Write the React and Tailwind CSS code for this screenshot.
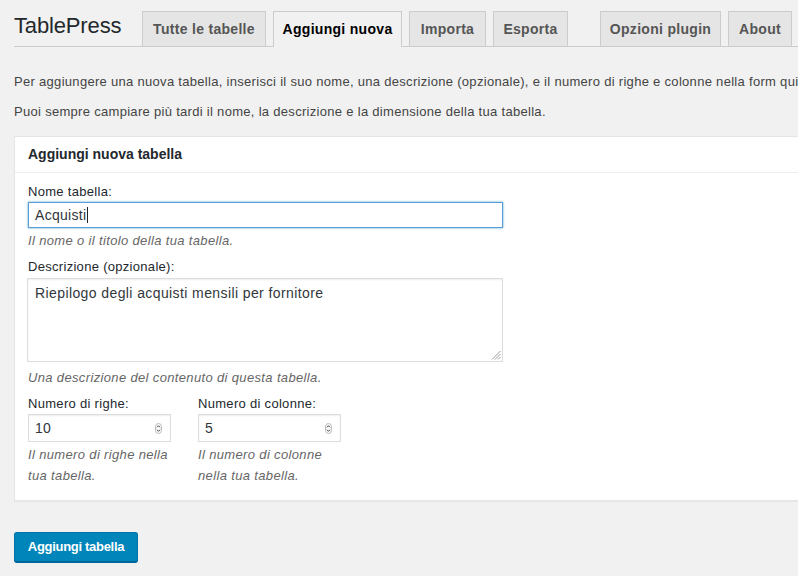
import React from 'react'

const tabs = [
  { label: 'Tutte le tabelle', w: 'w-[124px]' },
  { label: 'Aggiungi nuova', w: 'w-[129px]', active: true },
  { label: 'Importa', w: 'w-[77px]' },
  { label: 'Esporta', w: 'w-[75px]', gap: 'mr-[32px]' },
  { label: 'Opzioni plugin', w: 'w-[121px]' },
  { label: 'About', w: 'w-[64px]' },
]

function Spinner() {
  return (
    <svg width="7" height="11" viewBox="0 0 7 11" className="shrink-0">
      <rect x="0.5" y="0.5" width="6" height="10" rx="3" fill="#fafafa" stroke="#bbb" />
      <path d="M2 4.3 L3.5 2.7 L5 4.3" fill="none" stroke="#444" strokeWidth="1" />
      <path d="M2 6.7 L3.5 8.3 L5 6.7" fill="none" stroke="#444" strokeWidth="1" />
    </svg>
  )
}

function NumberField({ label, value, help }) {
  return (
    <div className="w-[143px]">
      <div className="text-[13px] leading-[19px] tracking-[0.3px] text-[#23282d]">{label}</div>
      <div className="mt-[1px] h-[28px] border border-[#ddd] bg-white shadow-[inset_0_1px_2px_rgba(0,0,0,0.07)] flex items-center justify-between pl-[6px] pr-[8px]">
        <span className="text-[14px] tracking-[0.3px] text-[#32373c]">{value}</span>
        <Spinner />
      </div>
      <p className="mt-[2px] text-[13px] leading-[21px] tracking-[0.35px] italic text-[#666]">{help}</p>
    </div>
  )
}

export default function App() {
  return (
    <div className="w-[798px] h-[576px] overflow-hidden bg-[#f1f1f1] font-['Liberation_Sans',Arial,sans-serif]">
      <div className="w-[1000px] pl-[14px]">
        {/* Title + tabs */}
        <div className="flex items-end pt-[11px] border-b border-[#ccc]">
          <h1 className="self-start w-[128px] text-[22px] leading-[30px] tracking-[-0.15px] text-[#23282d]">TablePress</h1>
          {tabs.map((t) => (
            <div
              key={t.label}
              className={`${t.w} ${t.gap || 'mr-[7px]'} flex justify-center border border-b-0 border-[#ccc] text-[14px] font-bold leading-[20px] tracking-[0.3px] pt-[7px] ${
                t.active
                  ? 'h-[36px] -mb-px bg-[#f1f1f1] text-black'
                  : 'h-[35px] bg-[#e5e5e5] text-[#555]'
              }`}
            >
              {t.label}
            </div>
          ))}
        </div>

        {/* Intro */}
        <p className="mt-[25px] text-[13px] leading-[19px] tracking-[0.3px] text-[#444] whitespace-nowrap">
          Per aggiungere una nuova tabella, inserisci il suo nome, una descrizione (opzionale), e il numero di righe e colonne nella form qui sotto.
        </p>
        <p className="mt-[11px] text-[13px] leading-[19px] tracking-[0.3px] text-[#444] whitespace-nowrap">
          Puoi sempre campiare più tardi il nome, la descrizione e la dimensione della tua tabella.
        </p>

        {/* Panel */}
        <div className="mt-[15px] bg-white border border-[#e5e5e5] shadow-[0_1px_1px_rgba(0,0,0,0.04)]">
          <div className="h-[36px] flex items-center px-[13px] border-b border-[#eee]">
            <h2 className="text-[14px] font-bold text-[#23282d]">Aggiungi nuova tabella</h2>
          </div>
          <div className="px-[13px] pt-[9px] pb-[14px]">
            <div className="text-[13px] leading-[19px] tracking-[0.3px] text-[#23282d]">Nome tabella:</div>
            <div className="mt-[1px] w-[475px] h-[26px] border border-[#5b9dd9] shadow-[0_0_2px_rgba(30,140,190,0.8)] bg-white flex items-center pl-[6px]">
              <span className="text-[14px] tracking-[0.3px] text-[#32373c]">Acquisti</span>
              <span className="ml-[1px] w-px h-[16px] bg-[#222]" />
            </div>
            <p className="mt-[2px] text-[13px] leading-[21px] tracking-[0.35px] italic text-[#666]">Il nome o il titolo della tua tabella.</p>

            <div className="mt-[6px] text-[13px] leading-[19px] tracking-[0.3px] text-[#23282d]">Descrizione (opzionale):</div>
            <div className="relative mt-[2px] -ml-px w-[476px] h-[84px] border border-[#ddd] bg-white shadow-[inset_0_1px_2px_rgba(0,0,0,0.07)] pl-[7px] pt-[2px]">
              <span className="text-[14px] leading-[18px] tracking-[0.4px] text-[#32373c]">Riepilogo degli acquisti mensili per fornitore</span>
              <svg width="10" height="10" viewBox="0 0 10 10" className="absolute right-[1px] bottom-[1px]">
                <path d="M9.5 1 L1 9.5 M9.5 4 L4 9.5 M9.5 7 L7 9.5" stroke="#999" strokeWidth="1" />
              </svg>
            </div>
            <p className="mt-[5px] text-[13px] leading-[21px] tracking-[0.35px] italic text-[#666]">Una descrizione del contenuto di questa tabella.</p>

            <div className="mt-[6px] flex gap-[27px]">
              <NumberField label="Numero di righe:" value="10" help="Il numero di righe nella tua tabella." />
              <NumberField label="Numero di colonne:" value="5" help="Il numero di colonne nella tua tabella." />
            </div>
          </div>
        </div>

        {/* Submit */}
        <button className="mt-[31px] w-[124px] h-[30px] rounded-[3px] bg-[#0085ba] border border-[#0073aa] border-b-[#006799] shadow-[0_1px_0_#006799] text-white text-[13px] font-bold tracking-[-0.3px] flex items-center justify-center">
          Aggiungi tabella
        </button>
      </div>
    </div>
  )
}
